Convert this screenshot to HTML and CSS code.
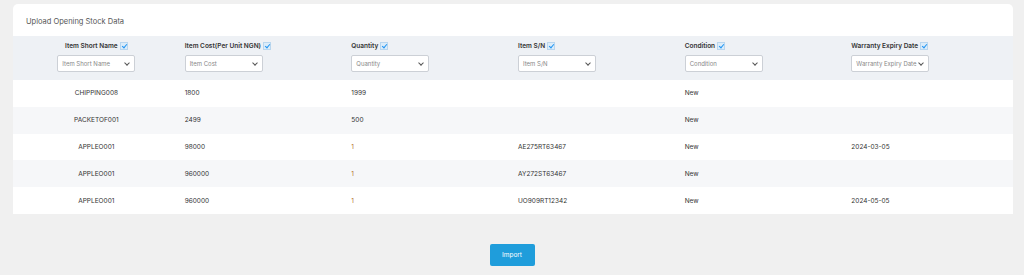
FILE: index.html
```html
<!DOCTYPE html>
<html>
<head>
<meta charset="utf-8">
<link rel="stylesheet" href="styles.css">
</head>
<body>
<div class="page">
  <div class="card">
    <div class="title">Upload Opening Stock Data</div>
    <div class="table">
      <div class="row head">
        <div class="cell first">
          <div class="label">Item Short Name <span class="chk"></span></div>
          <div class="sel"><span>Item Short Name</span><i class="chev"></i></div>
        </div>
        <div class="cell">
          <div class="label">Item Cost(Per Unit NGN) <span class="chk"></span></div>
          <div class="sel"><span>Item Cost</span><i class="chev"></i></div>
        </div>
        <div class="cell">
          <div class="label">Quantity <span class="chk"></span></div>
          <div class="sel"><span>Quantity</span><i class="chev"></i></div>
        </div>
        <div class="cell">
          <div class="label">Item S/N <span class="chk"></span></div>
          <div class="sel"><span>Item S/N</span><i class="chev"></i></div>
        </div>
        <div class="cell">
          <div class="label">Condition <span class="chk"></span></div>
          <div class="sel"><span>Condition</span><i class="chev"></i></div>
        </div>
        <div class="cell">
          <div class="label">Warranty Expiry Date <span class="chk"></span></div>
          <div class="sel"><span>Warranty Expiry Date</span><i class="chev"></i></div>
        </div>
      </div>
      <div class="row data">
        <div class="cell first">CHIPPING008</div><div class="cell">1800</div><div class="cell">1999</div><div class="cell"></div><div class="cell">New</div><div class="cell"></div>
      </div>
      <div class="row data alt">
        <div class="cell first">PACKETOF001</div><div class="cell">2499</div><div class="cell">500</div><div class="cell"></div><div class="cell">New</div><div class="cell"></div>
      </div>
      <div class="row data">
        <div class="cell first">APPLEO001</div><div class="cell">98000</div><div class="cell qty">1</div><div class="cell">AE275RT63467</div><div class="cell">New</div><div class="cell">2024-03-05</div>
      </div>
      <div class="row data alt">
        <div class="cell first">APPLEO001</div><div class="cell">960000</div><div class="cell qty">1</div><div class="cell">AY272ST63467</div><div class="cell">New</div><div class="cell"></div>
      </div>
      <div class="row data">
        <div class="cell first">APPLEO001</div><div class="cell">960000</div><div class="cell qty">1</div><div class="cell">UO909RT12342</div><div class="cell">New</div><div class="cell">2024-05-05</div>
      </div>
    </div>
  </div>
  <div class="actions"><button class="btn">Import</button></div>
</div>
</body>
</html>
```
FILE: styles.css
```css
* { box-sizing: border-box; }
html, body { margin: 0; padding: 0; }
body {
  background: #f0f0f0;
  font-family: "Inter", "Liberation Sans", sans-serif;
  color: #333;
  width: 1024px;
  height: 275px;
  overflow: hidden;
}
.page { padding: 4px 11px 0 13px; }
.card {
  background: #fff;
  border-radius: 5px 5px 0 0;
  width: 1000px;
}
.title {
  height: 32px;
  padding-left: 13px;
  display: flex;
  align-items: center;
  font-size: 7.5px;
  color: #555;
  padding-top: 2px;
}
.row {
  display: grid;
  grid-template-columns: repeat(6, 1fr);
}
.head {
  background: #eef1f5;
  height: 44px;
  padding-top: 5px;
}
.head .cell { display: flex; flex-direction: column; align-items: flex-start; padding-left: 5px; }
.head .cell.first { align-items: center; padding-left: 0; }
.label {
  font-size: 6.5px;
  font-weight: 600;
  color: #333;
  display: flex;
  align-items: center;
  gap: 2px;
  height: 10px;
}
.chk {
  width: 8px; height: 8px;
  background: #dcecf9;
  border: 1px solid #b9d6ee;
  position: relative;
  display: inline-block;
}
.chk::after {
  content: "";
  position: absolute;
  left: 2px; top: 0px;
  width: 2px; height: 4px;
  border: solid #2196f3;
  border-width: 0 1.2px 1.2px 0;
  transform: rotate(40deg);
}
.sel {
  margin-top: 4px;
  width: 78px;
  height: 17px;
  background: #fff;
  border: 1px solid #ccd0d6;
  border-radius: 2px;
  display: flex;
  align-items: center;
  justify-content: space-between;
  padding: 0 5px 0 4px;
  font-size: 6px;
  color: #888;
}
.chev {
  width: 4px; height: 4px;
  border: solid #555;
  border-width: 0 1px 1px 0;
  transform: rotate(45deg);
  margin-top: -2px;
}
.data { height: 26.8px; }
.data.alt { background: #f6f7f9; }
.data .cell {
  display: flex;
  align-items: center;
  padding-left: 5px;
  font-size: 6.5px;
  color: #333;
}
.data .cell.first { justify-content: center; padding-left: 0; }
.data .cell.qty { color: #b4701f; }
.actions {
  display: flex;
  justify-content: center;
  padding-top: 30px;
  margin-left: -2px;
}
.btn {
  width: 45px;
  height: 22px;
  background: #1f9ddb;
  color: #fff;
  border: none;
  border-radius: 2px;
  font-family: inherit;
  font-size: 6.5px;
  padding: 0;
}
```
